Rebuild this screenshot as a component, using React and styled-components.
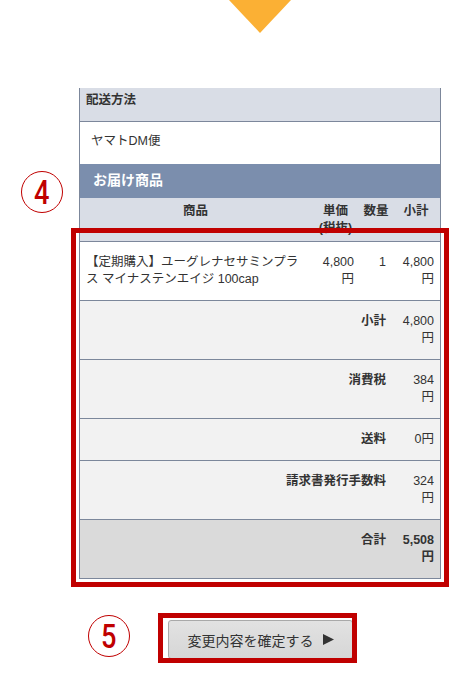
import React from "react";
import styled, { createGlobalStyle } from "styled-components";

const COLORS = {
  text: "#333333",
  line: "#7c879b",
  head: "#d9dde6",
  band: "#7b8ead",
  light: "#f2f2f2",
  total: "#dadada",
  red: "#c00000",
  arrow: "#fbb034",
};

const GlobalStyle = createGlobalStyle`
  html, body {
    margin: 0;
    padding: 0;
    background: #ffffff;
  }
  body {
    font-family: "Liberation Sans", "Noto Sans CJK JP", sans-serif;
    color: ${COLORS.text};
  }
`;

const items = [
  {
    name: "【定期購入】ユーグレナセサミンプラス マイナステンエイジ 100cap",
    price: "4,800円",
    qty: "1",
    sub: "4,800円",
  },
];

const summary = [
  { label: "小計", value: "4,800円" },
  { label: "消費税", value: "384円" },
  { label: "送料", value: "0円" },
  { label: "請求書発行手数料", value: "324円" },
  { label: "合計", value: "5,508円", total: true },
];

const App = () => {
  return (
    <Page>
      <GlobalStyle />
      <ArrowBox>
        <svg width="62" height="33" viewBox="0 0 62 33">
          <polygon points="0,0 62,0 31,33" fill={COLORS.arrow} />
        </svg>
      </ArrowBox>

      <Table>
        <SectionHead>配送方法</SectionHead>
        <PlainRow>ヤマトDM便</PlainRow>
        <Band>お届け商品</Band>
        <HeadRow>
          <HeadCell>商品</HeadCell>
          <HeadCell>
            単価<NoWrap>(税抜)</NoWrap>
          </HeadCell>
          <HeadCell>数量</HeadCell>
          <HeadCell>小計</HeadCell>
        </HeadRow>

        <Highlighted>
          {items.map((it) => (
            <ItemRow key={it.name}>
              <NameCell>{it.name}</NameCell>
              <NumCell>{it.price}</NumCell>
              <NumCell>{it.qty}</NumCell>
              <NumCell>{it.sub}</NumCell>
            </ItemRow>
          ))}
          {summary.map((s) => (
            <SumRow key={s.label} $total={s.total}>
              <SumLabel>{s.label}</SumLabel>
              <NumCell $bold={s.total}>{s.value}</NumCell>
            </SumRow>
          ))}
          <RedFrame $top={-14} $left={-9} $right={-9} $bottom={-9} />
        </Highlighted>
      </Table>

      <ButtonArea>
        <ButtonWrap>
          <ConfirmButton type="button">
            変更内容を確定する
            <svg width="11" height="11" viewBox="0 0 11 11">
              <polygon points="0,0 11,5.5 0,11" fill="#333" />
            </svg>
          </ConfirmButton>
          <RedFrame $top={-7} $left={-9} $right={-4} $bottom={-4} />
        </ButtonWrap>
      </ButtonArea>

      <Marker $x={21} $y={171}>
        <span>4</span>
      </Marker>
      <Marker $x={88} $y={615}>
        <span>5</span>
      </Marker>
    </Page>
  );
};

export default App;

const Page = styled.div`
  position: relative;
  width: 468px;
  height: 678px;
  overflow: hidden;
`;

const ArrowBox = styled.div`
  display: flex;
  justify-content: center;
  width: 362px;
  margin-left: 79px;
  height: 33px;

  svg {
    display: block;
  }
`;

const Table = styled.div`
  width: 362px;
  box-sizing: border-box;
  margin: 55px 0 0 79px;
  border-left: 1px solid ${COLORS.line};
  border-right: 1px solid ${COLORS.line};
  border-bottom: 1px solid ${COLORS.line};
  font-size: 12.5px;
  line-height: 17px;
`;

const SectionHead = styled.div`
  background: ${COLORS.head};
  padding: 4px 6px 12px;
  font-weight: bold;
  border-bottom: 1px solid ${COLORS.line};
`;

const PlainRow = styled.div`
  background: #ffffff;
  padding: 11px 11px 14px;
`;

const Band = styled.div`
  background: ${COLORS.band};
  color: #ffffff;
  font-size: 14px;
  font-weight: bold;
  padding: 8px 13px 9px;
`;

const grid = `
  display: grid;
  grid-template-columns: 1fr 49px 32px 48px;
`;

const HeadRow = styled.div`
  ${grid}
  background: ${COLORS.head};
  border-bottom: 1px solid ${COLORS.line};
  padding: 5px 0 4px;
  font-weight: bold;
`;

const HeadCell = styled.div`
  text-align: center;
  padding: 0 1px;
`;

const NoWrap = styled.span`
  display: inline-block;
  white-space: nowrap;
`;

const Highlighted = styled.div`
  position: relative;
`;

const ItemRow = styled.div`
  ${grid}
  background: #ffffff;
  border-bottom: 1px solid ${COLORS.line};
  padding: 12px 0;
`;

const NameCell = styled.div`
  padding: 0 6px;
`;

const NumCell = styled.div`
  text-align: right;
  padding: 0 6px 0 10px;
  font-weight: ${(p) => (p.$bold ? "bold" : "normal")};
`;

const SumRow = styled.div`
  display: grid;
  grid-template-columns: 1fr 48px;
  background: ${(p) => (p.$total ? COLORS.total : COLORS.light)};
  padding: 12px 0;

  & + & {
    border-top: 1px solid ${COLORS.line};
  }
`;

const SumLabel = styled.div`
  text-align: right;
  font-weight: bold;
  padding-right: 6px;
`;

const RedFrame = styled.div`
  position: absolute;
  top: ${(p) => p.$top}px;
  left: ${(p) => p.$left}px;
  right: ${(p) => p.$right}px;
  bottom: ${(p) => p.$bottom}px;
  border: 5px solid ${COLORS.red};
  pointer-events: none;
`;

const ButtonArea = styled.div`
  display: flex;
  justify-content: center;
  width: 362px;
  margin: 41px 0 0 79px;
`;

const ButtonWrap = styled.div`
  position: relative;
`;

const ConfirmButton = styled.button`
  display: flex;
  align-items: center;
  justify-content: center;
  gap: 9px;
  width: 185px;
  height: 39px;
  margin-left: 1px;
  padding: 0;
  background: linear-gradient(#e2e2e2, #d6d6d6);
  border: 1px solid #a9a9a9;
  border-radius: 3px;
  font-family: "Noto Sans CJK JP", "Noto Sans", sans-serif;
  font-size: 14px;
  color: ${COLORS.text};

  svg {
    display: block;
  }
`;

const Marker = styled.div`
  position: absolute;
  left: ${(p) => p.$x}px;
  top: ${(p) => p.$y}px;
  width: 42px;
  height: 42px;
  box-sizing: border-box;
  border: 1.5px solid ${COLORS.red};
  border-radius: 50%;
  display: flex;
  align-items: center;
  justify-content: center;
  color: ${COLORS.red};
  font-family: "Roboto", "Liberation Sans", sans-serif;
  font-size: 34px;
  font-weight: 500;
  line-height: 1;

  span {
    display: block;
    transform: scaleX(0.8);
  }
`;
